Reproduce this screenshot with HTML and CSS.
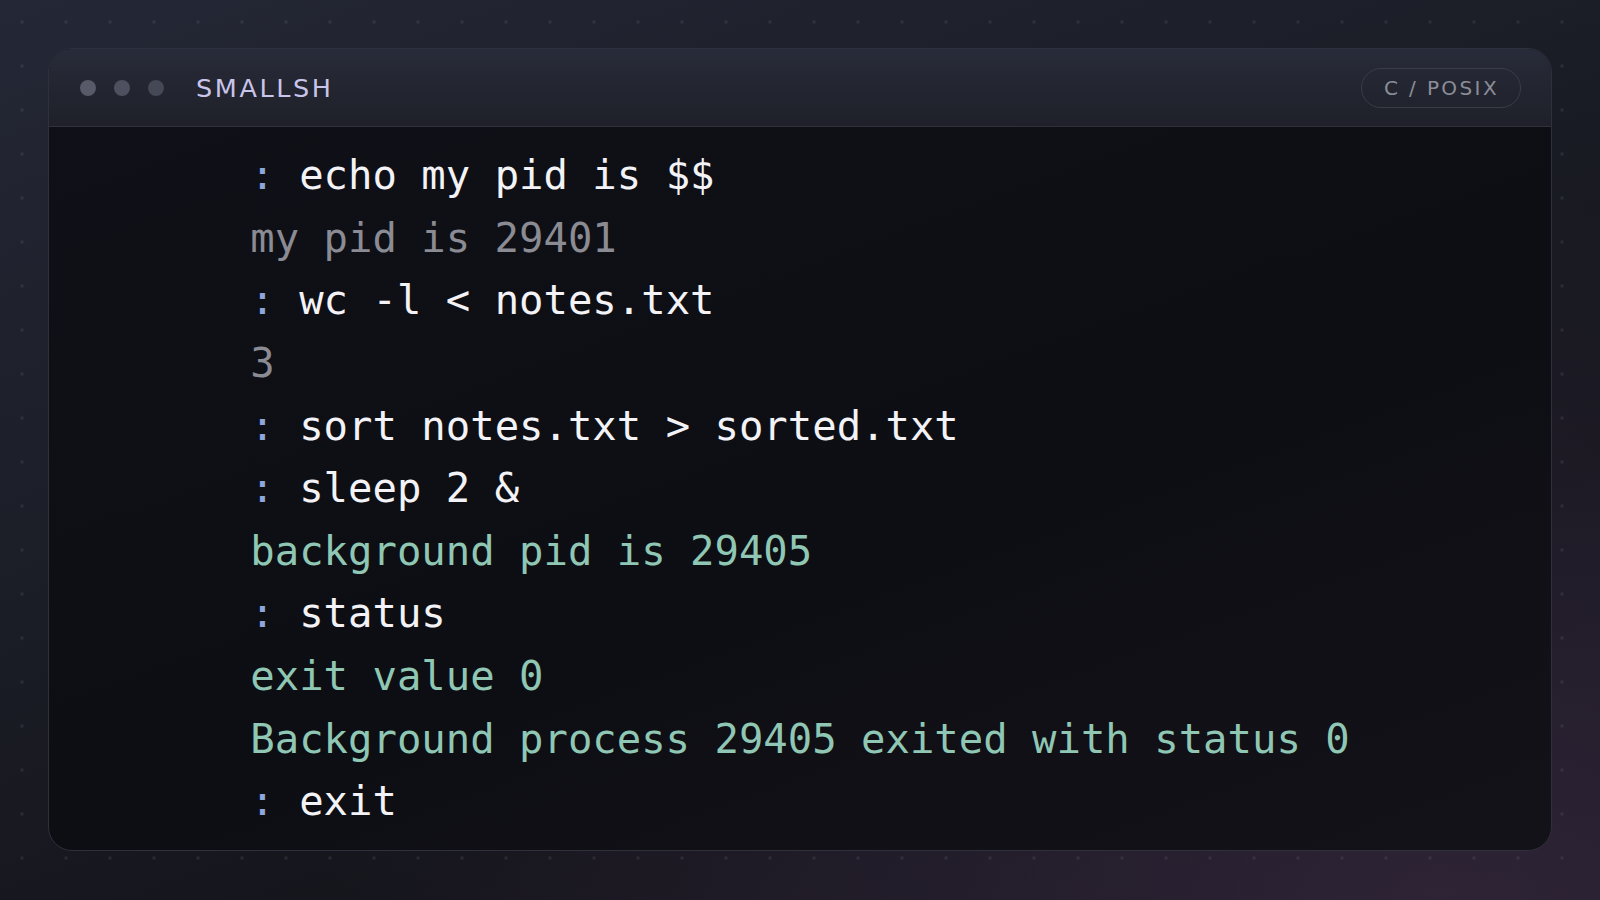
FILE: index.html
```html
<!DOCTYPE html>
<html lang="en">
<head>
<meta charset="utf-8">
<title>smallsh</title>
<link rel="stylesheet" href="styles.css">
</head>
<body>
<div class="window">
  <header class="titlebar">
    <div class="lights"><span class="light l1"></span><span class="light l2"></span><span class="light l3"></span></div>
    <div class="title">SMALLSH</div>
    <div class="badge">C / POSIX</div>
  </header>
  <main class="term">
    <div class="lines">
      <div class="line"><span class="p">:</span> <span class="cmd">echo my pid is $$</span></div>
      <div class="line out">my pid is 29401</div>
      <div class="line"><span class="p">:</span> <span class="cmd">wc -l &lt; notes.txt</span></div>
      <div class="line out">3</div>
      <div class="line"><span class="p">:</span> <span class="cmd">sort notes.txt &gt; sorted.txt</span></div>
      <div class="line"><span class="p">:</span> <span class="cmd">sleep 2 &amp;</span></div>
      <div class="line ok">background pid is 29405</div>
      <div class="line"><span class="p">:</span> <span class="cmd">status</span></div>
      <div class="line ok">exit value 0</div>
      <div class="line ok">Background process 29405 exited with status 0</div>
      <div class="line"><span class="p">:</span> <span class="cmd">exit</span></div>
    </div>
  </main>
</div>
</body>
</html>
```

FILE: styles.css
```css
* { box-sizing: border-box; }
html, body { height: 100%; }
body {
  margin: 0;
  width: 1600px;
  height: 900px;
  overflow: hidden;
  padding: 48px 48px 49px 48px;
  display: flex;
  background-color: #16171f;
  background-image:
    radial-gradient(circle at 1.5px 1.5px, rgba(120,125,150,0.18) 1.5px, transparent 2px),
    radial-gradient(ellipse at 90% 100%, rgba(60,45,70,0.55), transparent 55%),
    linear-gradient(160deg, #242735 0%, #1a1c25 45%, #15151c 70%, #1c1822 100%);
  background-size: 44px 44px, 100% 100%, 100% 100%;
  background-position: 20.5px 20.5px, 0 0, 0 0;
  font-family: "DejaVu Sans", "Liberation Sans", sans-serif;
}
.window {
  flex: 1;
  display: flex;
  flex-direction: column;
  border: 1.5px solid #2e303b;
  border-radius: 24px;
  overflow: hidden;
  background: #0e0f15;
  background-image: linear-gradient(160deg, #101118 0%, #0d0e13 60%, #141219 100%);
}
.titlebar {
  height: 78px;
  flex: none;
  display: flex;
  align-items: center;
  padding: 0 30px 0 30px;
  background: linear-gradient(180deg, #282b39 0%, #22252f 60%, #1f2029 100%);
  border-bottom: 1.5px solid #2f313b;
}
.lights { display: flex; gap: 18px; margin-left: 1px; }
.light { width: 16px; height: 16px; border-radius: 50%; background: #5a5d6b; }
.l1 { background: #575a69; }
.l2 { background: #4d505e; }
.l3 { background: #454855; }
.title {
  margin-left: 32px;
  font-size: 25.5px;
  letter-spacing: 2.6px;
  color: #c9c4ea;
}
.badge {
  margin-left: auto;
  height: 40px;
  padding: 0 21px 0 22px;
  display: flex;
  align-items: center;
  border: 1.5px solid #3a3c47;
  border-radius: 20px;
  color: #8b8e98;
  font-size: 20px;
  letter-spacing: 2.4px;
}
.term {
  flex: 1;
  display: flex;
  align-items: center;
  justify-content: center;
}
.lines {
  font-family: "DejaVu Sans Mono", "Liberation Mono", monospace;
  font-size: 40.6px;
  line-height: 62.6px;
  color: #f2f2f6;
}
.line { white-space: pre; }
.p { color: #8da6dc; }
.cmd { color: #f3f3f7; }
.out { color: #8b8b94; }
.ok { color: #8fc7b4; }
```
